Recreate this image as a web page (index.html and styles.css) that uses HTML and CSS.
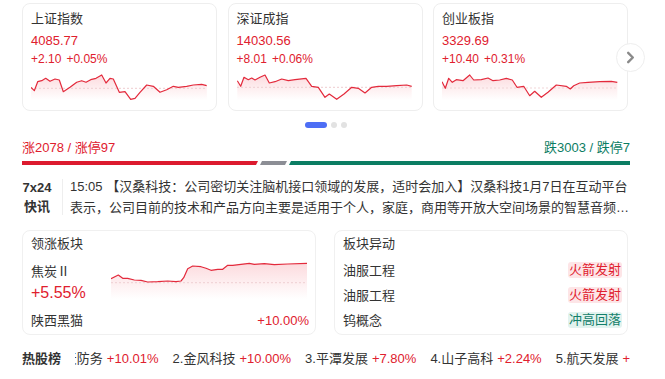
FILE: index.html
```html
<!DOCTYPE html>
<html lang="zh-CN">

<head>
    <meta charset="UTF-8">
    <meta name="viewport" content="width=device-width, initial-scale=1.0">
    <title>行情</title>
    <link rel="stylesheet" href="styles.css">
</head>

<body>
    <div class="page">
        <div class="index-row">
            <div class="index-card">
                <div class="index-name">上证指数</div>
                <div class="index-price">4085.77</div>
                <div class="index-change"><span>+2.10</span><span class="pct">+0.05%</span></div>
                <svg class="spark" viewBox="0 0 176 28" preserveAspectRatio="none">
                    <defs>
                        <linearGradient id="g1" x1="0" y1="0" x2="0" y2="1">
                            <stop offset="0" stop-color="#f04a5a" stop-opacity="0.2" />
                            <stop offset="1" stop-color="#f04a5a" stop-opacity="0" />
                        </linearGradient>
                    </defs>
                    <polygon fill="url(#g1)" points="0,15.3 3.3,18.7 6.7,9.7 10.7,8.7 14.7,6.3 19,9.3 24,7 28.3,8 32.3,19.7 39,15.3 45.7,10.3 50.7,8.7 55,10.3 59.7,7.7 65,6.3 70.7,3 75,11 79,6.3 82.3,7 88.3,20.3 94,19.7 99.7,27.3 104,26.3 109,20.3 115.7,13 122.3,14.3 129,20.3 135.7,17.7 142.3,14.3 147.3,15.3 155.7,14.3 162.3,13 170.7,12.3 175.7,13.7 176,28 0,28" />
                    <line x1="0" y1="16.3" x2="176" y2="16.3" class="base" />
                    <polyline class="line" points="0,15.3 3.3,18.7 6.7,9.7 10.7,8.7 14.7,6.3 19,9.3 24,7 28.3,8 32.3,19.7 39,15.3 45.7,10.3 50.7,8.7 55,10.3 59.7,7.7 65,6.3 70.7,3 75,11 79,6.3 82.3,7 88.3,20.3 94,19.7 99.7,27.3 104,26.3 109,20.3 115.7,13 122.3,14.3 129,20.3 135.7,17.7 142.3,14.3 147.3,15.3 155.7,14.3 162.3,13 170.7,12.3 175.7,13.7" />
                </svg>
            </div>
            <div class="index-card">
                <div class="index-name">深证成指</div>
                <div class="index-price">14030.56</div>
                <div class="index-change"><span>+8.01</span><span class="pct">+0.06%</span></div>
                <svg class="spark" viewBox="0 0 176 28" preserveAspectRatio="none">
                    <defs>
                        <linearGradient id="g2" x1="0" y1="0" x2="0" y2="1">
                            <stop offset="0" stop-color="#f04a5a" stop-opacity="0.2" />
                            <stop offset="1" stop-color="#f04a5a" stop-opacity="0" />
                        </linearGradient>
                    </defs>
                    <polygon fill="url(#g2)" points="0.3,8.7 3.7,14.3 7,5.3 11.3,7.7 14.7,6 18,8 23,5.3 28,3 32.3,11 38,9.7 44.7,7 51.3,8.7 58,7.7 69,6.3 74.7,14.3 81.3,15.3 88,25.3 92.3,22 99.7,27.3 107,22 114.7,15.3 121.3,16.3 128,21 134.7,15.3 141.3,14.3 149.7,14.3 159.7,13.7 169.7,13 174.7,14.3 174.7,28 0.3,28" />
                    <line x1="0" y1="15.3" x2="176" y2="15.3" class="base" />
                    <polyline class="line" points="0.3,8.7 3.7,14.3 7,5.3 11.3,7.7 14.7,6 18,8 23,5.3 28,3 32.3,11 38,9.7 44.7,7 51.3,8.7 58,7.7 69,6.3 74.7,14.3 81.3,15.3 88,25.3 92.3,22 99.7,27.3 107,22 114.7,15.3 121.3,16.3 128,21 134.7,15.3 141.3,14.3 149.7,14.3 159.7,13.7 169.7,13 174.7,14.3" />
                </svg>
            </div>
            <div class="index-card">
                <div class="index-name">创业板指</div>
                <div class="index-price">3329.69</div>
                <div class="index-change"><span>+10.40</span><span class="pct">+0.31%</span></div>
                <svg class="spark" viewBox="0 0 176 28" preserveAspectRatio="none">
                    <defs>
                        <linearGradient id="g3" x1="0" y1="0" x2="0" y2="1">
                            <stop offset="0" stop-color="#f04a5a" stop-opacity="0.2" />
                            <stop offset="1" stop-color="#f04a5a" stop-opacity="0" />
                        </linearGradient>
                    </defs>
                    <polygon fill="url(#g3)" points="0,9.7 3.3,16.3 6.7,6.3 10.3,10.3 14.3,7.7 21,8.7 27.7,3 31.7,8 39.3,7.7 46,6 51,8.7 57.7,8 64.3,6.3 70.3,8 75,15.3 81.7,14.3 87.7,23.7 92.7,19.3 99.3,25.3 106,20.3 114.3,13 124.3,14.3 128.3,17 131.7,13.7 137.7,11 146,10.3 157.7,9.7 169.3,9.3 175.3,10.3 175.3,28 0,28" />
                    <line x1="0" y1="16" x2="176" y2="16" class="base" />
                    <polyline class="line" points="0,9.7 3.3,16.3 6.7,6.3 10.3,10.3 14.3,7.7 21,8.7 27.7,3 31.7,8 39.3,7.7 46,6 51,8.7 57.7,8 64.3,6.3 70.3,8 75,15.3 81.7,14.3 87.7,23.7 92.7,19.3 99.3,25.3 106,20.3 114.3,13 124.3,14.3 128.3,17 131.7,13.7 137.7,11 146,10.3 157.7,9.7 169.3,9.3 175.3,10.3" />
                </svg>
            </div>
            <div class="next-btn">
                <svg viewBox="0 0 29 29" width="29" height="29">
                    <path d="M12 9.5 L17 14.5 L12 19.5" fill="none" stroke="#8a8a8a" stroke-width="2.6" stroke-linecap="round" stroke-linejoin="round" />
                </svg>
            </div>
        </div>

        <div class="dots">
            <span class="dot active"></span>
            <span class="dot"></span>
            <span class="dot"></span>
        </div>

        <div class="breadth">
            <span class="up">涨2078 / 涨停97</span>
            <span class="down">跌3003 / 跌停7</span>
        </div>
        <div class="breadth-bar">
            <span class="seg seg-up"></span>
            <span class="seg seg-flat"></span>
            <span class="seg seg-down"></span>
        </div>

        <div class="news">
            <div class="news-label">7x24<br>快讯</div>
            <div class="news-divider"></div>
            <div class="news-text">15:05 【汉桑科技：公司密切关注脑机接口领域的发展，适时会加入】汉桑科技1月7日在互动平台表示，公司目前的技术和产品方向主要是适用于个人，家庭，商用等开放大空间场景的智慧音频解决方案，暂未涉及脑机接口相关业务。</div>
        </div>

        <div class="panel-row">
            <div class="panel">
                <div class="panel-title">领涨板块</div>
                <div class="lead">
                    <div class="lead-info">
                        <div class="lead-name">焦炭Ⅱ</div>
                        <div class="lead-pct">+5.55%</div>
                    </div>
                    <svg class="lead-chart" viewBox="0 0 196 40" preserveAspectRatio="none">
                        <defs>
                            <linearGradient id="g4" x1="0" y1="0" x2="0" y2="1">
                                <stop offset="0" stop-color="#f04a5a" stop-opacity="0.2" />
                                <stop offset="1" stop-color="#f04a5a" stop-opacity="0" />
                            </linearGradient>
                        </defs>
                        <polygon fill="url(#g4)" points="0,19.7 7.3,16 11.7,19.3 16.7,19.3 23.3,21 30,21.3 36.7,23 46.7,22.7 56.7,22 65,22.7 70,22 72.7,18.7 76.7,9.7 81.7,7 90,7.7 95,9.3 100,11.3 106.7,10.3 111.7,10.3 116.7,6.3 121.7,6.3 130,5.3 138.3,4.3 143.3,5.3 153.3,4.7 163.3,5.7 176.7,5 196,4.3 196,40 0,40" />
                        <line x1="0" y1="23.7" x2="196" y2="23.7" class="base" />
                        <polyline class="line" points="0,19.7 7.3,16 11.7,19.3 16.7,19.3 23.3,21 30,21.3 36.7,23 46.7,22.7 56.7,22 65,22.7 70,22 72.7,18.7 76.7,9.7 81.7,7 90,7.7 95,9.3 100,11.3 106.7,10.3 111.7,10.3 116.7,6.3 121.7,6.3 130,5.3 138.3,4.3 143.3,5.3 153.3,4.7 163.3,5.7 176.7,5 196,4.3" />
                    </svg>
                </div>
                <div class="lead-foot">
                    <span>陕西黑猫</span>
                    <span class="red">+10.00%</span>
                </div>
            </div>
            <div class="panel panel-move">
                <div class="panel-title">板块异动</div>
                <div class="move-row">
                    <span>油服工程</span>
                    <span class="tag tag-red">火箭发射</span>
                </div>
                <div class="move-row">
                    <span>油服工程</span>
                    <span class="tag tag-red">火箭发射</span>
                </div>
                <div class="move-row">
                    <span>钨概念</span>
                    <span class="tag tag-green">冲高回落</span>
                </div>
            </div>
        </div>

        <div class="hot">
            <div class="hot-label">热股榜</div>
            <div class="hot-scroll">
                <div class="hot-track">
                    <span class="hot-item">1.航天防务<em>+10.01%</em></span>
                    <span class="hot-item">2.金风科技<em>+10.00%</em></span>
                    <span class="hot-item">3.平潭发展<em>+7.80%</em></span>
                    <span class="hot-item">4.山子高科<em>+2.24%</em></span>
                    <span class="hot-item">5.航天发展<em>+9.98%</em></span>
                </div>
            </div>
        </div>
    </div>
</body>

</html>
```

FILE: styles.css
```css
body {
    margin: 0;
    background-color: #fff;
    font-family: "Liberation Sans", "Noto Sans CJK SC", sans-serif;
    font-size: 13px;
    color: #333;
}

.page {
    width: 608px;
    margin-left: 22px;
    padding-top: 3px;
}

.index-row {
    position: relative;
    display: grid;
    grid-template-columns: repeat(3, 195px);
    column-gap: 10.5px;
}

.index-card {
    border: 1px solid #eee;
    border-radius: 8px;
    padding: 5px 8px 8px 8px;
    height: 93px;
}

.index-name {
    font-size: 13px;
    line-height: 20px;
    color: #333;
}

.index-price {
    margin-top: 3px;
    line-height: 18px;
    color: #e0202e;
}

.index-change {
    font-size: 12px;
    line-height: 18px;
    color: #e0202e;
}

.index-change .pct {
    margin-left: 5px;
}

.spark {
    display: block;
    width: 176px;
    height: 28px;
    margin-top: 4px;
}

.spark .line,
.lead-chart .line {
    fill: none;
    stroke: #e32a3c;
    stroke-width: 1.2;
    stroke-linejoin: round;
}

.spark .base,
.lead-chart .base {
    stroke: #f1d5d8;
    stroke-width: 1.2;
    stroke-dasharray: 2 2;
}

.next-btn {
    position: absolute;
    left: 594px;
    top: 40px;
    width: 29px;
    height: 29px;
    border: 1px solid #eee;
    border-radius: 50%;
    background-color: #fff;
    box-sizing: border-box;
    display: flex;
    align-items: center;
    justify-content: center;
}

.dots {
    display: flex;
    justify-content: center;
    gap: 4px;
    margin-top: 11px;
    height: 6px;
}

.dot {
    width: 6px;
    height: 6px;
    border-radius: 3px;
    background-color: #e2e2e2;
}

.dot.active {
    width: 22px;
    background-color: #4d6ef5;
}

.breadth {
    display: flex;
    justify-content: space-between;
    margin-top: 11px;
    line-height: 18px;
}

.up {
    color: #e0202e;
}

.down {
    color: #0b7d63;
}

.breadth-bar {
    display: flex;
    gap: 2px;
    height: 4px;
    margin-top: 4px;
}

.seg {
    display: block;
    height: 4px;
}

.seg-up {
    width: 236px;
    background-color: #dc1a2e;
    clip-path: polygon(0 0, 100% 0, calc(100% - 2px) 100%, 0 100%);
}

.seg-flat {
    width: 27px;
    background-color: #8c8e95;
    clip-path: polygon(2px 0, 100% 0, calc(100% - 2px) 100%, 0 100%);
}

.seg-down {
    flex: 1;
    background-color: #0b7d63;
    clip-path: polygon(2px 0, 100% 0, 100% 100%, 0 100%);
}

.news {
    display: flex;
    margin-top: 11px;
}

.news-label {
    width: 30px;
    padding-top: 2px;
    font-weight: bold;
    line-height: 19px;
    text-align: center;
    color: #333;
}

.news-divider {
    width: 1px;
    margin: 3px 7px 3px 10px;
    background-color: #eee;
}

.news-text {
    flex: 1;
    line-height: 21px;
    color: #333;
    display: -webkit-box;
    -webkit-line-clamp: 2;
    -webkit-box-orient: vertical;
    overflow: hidden;
}

.panel-row {
    display: flex;
    gap: 18px;
    margin-top: 12px;
}

.panel {
    width: 294px;
    box-sizing: border-box;
    border: 1px solid #f0f0f0;
    border-radius: 8px;
    padding: 3px 6px 2px 8px;
    height: 105px;
}

.panel-title {
    line-height: 20px;
    color: #333;
}

.lead {
    display: flex;
    justify-content: space-between;
}

.lead-info {
    padding-top: 8px;
}

.lead-name {
    line-height: 20px;
}

.lead-pct {
    font-size: 16px;
    line-height: 21px;
    color: #e0202e;
}

.lead-chart {
    display: block;
    width: 196px;
    height: 40px;
    margin-top: 5px;
    margin-right: 2px;
}

.lead-foot {
    display: flex;
    justify-content: space-between;
    line-height: 20px;
    margin-top: 8px;
}

.red {
    color: #e0202e;
}

.panel-move {
    padding-right: 5px;
}

.panel-move .panel-title {
    margin-bottom: 3px;
}

.move-row {
    display: flex;
    justify-content: space-between;
    align-items: center;
    height: 25px;
}

.tag {
    padding: 0 1px;
    line-height: 16px;
    border-radius: 3px;
}

.tag-red {
    background-color: #fde5e7;
    color: #e0202e;
}

.tag-green {
    background-color: #e2f3ef;
    color: #13806a;
}

.hot {
    display: flex;
    align-items: center;
    margin-top: 14px;
    line-height: 20px;
}

.hot-label {
    font-weight: bold;
    color: #333;
    margin-right: 14px;
}

.hot-scroll {
    flex: 1;
    overflow: hidden;
}

.hot-track {
    display: flex;
    white-space: nowrap;
    transform: translateX(-35px);
}

.hot-item {
    margin-right: 14px;
    color: #333;
}

.hot-item em {
    font-style: normal;
    color: #e0202e;
    margin-left: 4px;
}
```
